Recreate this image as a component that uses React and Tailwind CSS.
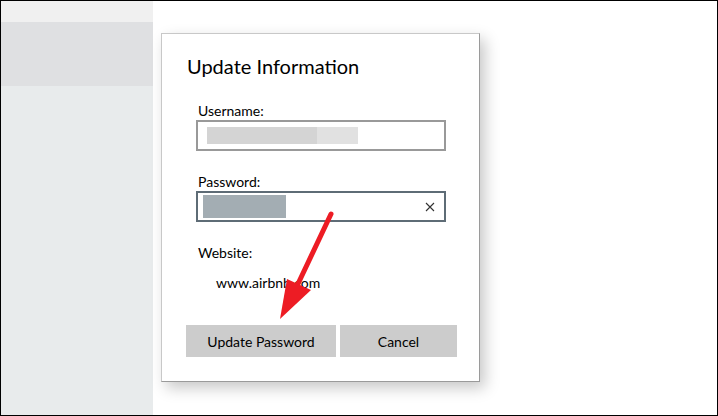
import React from "react";

export default function App() {
  return (
    <div
      className="relative w-[718px] h-[416px] border border-black flex overflow-hidden bg-white"
      style={{ fontFamily: 'Lato, "Noto Sans", sans-serif' }}
    >
      {/* left panel */}
      <div className="w-[152px] flex flex-col">
        <div className="h-[21px] bg-[#f0f0f0]" />
        <div className="h-[64px] bg-[#dfe0e2]" />
        <div className="flex-1 bg-[#e8ebec]" />
      </div>
      <div className="flex-1 bg-white" />

      {/* dialog */}
      <div className="absolute left-[160px] top-[32px] w-[319px] h-[349px] bg-white border border-t-[#c8c8c8] border-l-[#c8c8c8] border-r-[#9a9a9a] border-b-[#9a9a9a] shadow-[5px_6px_14px_rgba(0,0,0,0.22)] flex flex-col">
        <div className="pt-[19px] pl-[25px] text-[20px] leading-[27px] text-black">Update Information</div>
        <div className="pl-[34px] pr-[33px] flex flex-col">
          <div className="mt-[21px] pl-[2px] text-[14px] leading-[19px] text-black">Username:</div>
          <div className="h-[31px] border-2 border-[#999999] flex items-center pl-[9px]">
            <div className="h-[17px] w-[110px] bg-[#d4d4d4]" />
            <div className="h-[17px] w-[41px] bg-[#e1e1e1]" />
          </div>
          <div className="mt-[21px] pl-[2px] text-[14px] leading-[19px] text-black">Password:</div>
          <div className="h-[31px] border-2 border-[#5e6c76] flex items-center pl-[5px] pr-[9px]">
            <div className="h-[23px] w-[83px] bg-[#a3adb3]" />
            <div className="flex-1" />
            <svg width="10" height="10" viewBox="0 0 10 10">
              <path d="M1 1 L9 9 M9 1 L1 9" stroke="#333" strokeWidth="1.1" fill="none" />
            </svg>
          </div>
          <div className="mt-[21px] pl-[2px] text-[14px] leading-[19px] text-black">Website:</div>
          <div className="mt-[11px] pl-[20px] text-[14px] leading-[19px] text-black">www.airbnb.com</div>
        </div>
        <div className="mt-[33px] pl-[24px] flex gap-[4px]">
          <button className="w-[150px] h-[32px] bg-[#cccccc] text-[14px] text-black">Update Password</button>
          <button className="w-[117px] h-[32px] bg-[#cccccc] text-[14px] text-black">Cancel</button>
        </div>
      </div>

      {/* red arrow annotation */}
      <svg className="absolute left-0 top-0" width="718" height="416" viewBox="0 0 718 416">
        <line x1="330" y1="213" x2="296" y2="285" stroke="#ed1c24" strokeWidth="5" strokeLinecap="round" />
        <polygon points="279,318 286,278 310,289" fill="#ed1c24" />
      </svg>
    </div>
  );
}
